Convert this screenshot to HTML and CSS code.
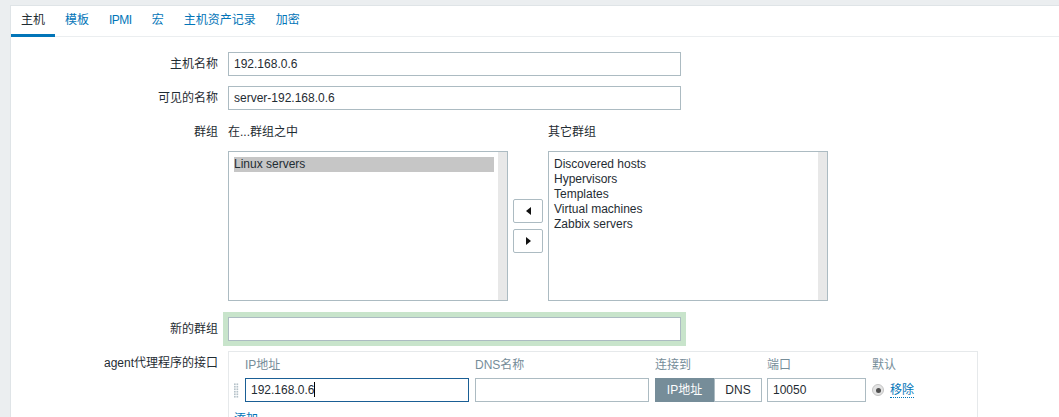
FILE: index.html
```html
<!DOCTYPE html>
<html lang="zh">
<head>
<meta charset="utf-8">
<title>主机</title>
<link rel="stylesheet" href="styles.css">
</head>
<body>
<div class="panel">
  <nav class="tabs">
    <a class="tab active">主机</a>
    <a class="tab">模板</a>
    <a class="tab narrow">IPMI</a>
    <a class="tab">宏</a>
    <a class="tab">主机资产记录</a>
    <a class="tab">加密</a>
  </nav>
  <div class="form">
    <div class="row">
      <div class="lbl">主机名称</div>
      <div class="field">192.168.0.6</div>
    </div>
    <div class="row">
      <div class="lbl">可见的名称</div>
      <div class="field">server-192.168.0.6</div>
    </div>
    <div class="row">
      <div class="lbl">群组</div>
      <div class="twin">
        <div class="twin-col">
          <div class="twin-head">在...群组之中</div>
          <div class="listbox">
            <div class="items">
              <div class="item selected">Linux servers</div>
            </div>
            <div class="track"></div>
          </div>
        </div>
        <div class="twin-buttons">
          <button class="arrow"><span class="tri left"></span></button>
          <button class="arrow"><span class="tri right"></span></button>
        </div>
        <div class="twin-col">
          <div class="twin-head">其它群组</div>
          <div class="listbox">
            <div class="items">
              <div class="item">Discovered hosts</div>
              <div class="item">Hypervisors</div>
              <div class="item">Templates</div>
              <div class="item">Virtual machines</div>
              <div class="item">Zabbix servers</div>
            </div>
            <div class="track"></div>
          </div>
        </div>
      </div>
    </div>
    <div class="row row-new">
      <div class="lbl">新的群组</div>
      <div class="field glow"></div>
    </div>
    <div class="row">
      <div class="lbl">agent代理程序的接口</div>
      <div class="iface">
        <div class="iface-grid">
          <div></div>
          <div class="th">IP地址</div>
          <div class="th">DNS名称</div>
          <div class="th">连接到</div>
          <div class="th">端口</div>
          <div class="th">默认</div>

          <div class="handle">
            <svg width="6" height="17" viewBox="0 0 6 17">
              <g fill="#b5c2c9">
                <rect x="0" y="0" width="2" height="2"/><rect x="3" y="0" width="2" height="2"/>
                <rect x="0" y="3" width="2" height="2"/><rect x="3" y="3" width="2" height="2"/>
                <rect x="0" y="6" width="2" height="2"/><rect x="3" y="6" width="2" height="2"/>
                <rect x="0" y="9" width="2" height="2"/><rect x="3" y="9" width="2" height="2"/>
                <rect x="0" y="12" width="2" height="2"/><rect x="3" y="12" width="2" height="2"/>
                <rect x="0" y="15" width="2" height="2"/><rect x="3" y="15" width="2" height="2"/>
              </g>
            </svg>
          </div>
          <div class="field focus">192.168.0.6<span class="caret"></span></div>
          <div class="field"></div>
          <div class="seg">
            <span class="seg-btn on">IP地址</span>
            <span class="seg-btn">DNS</span>
          </div>
          <div class="field">10050</div>
          <div class="def">
            <span class="radio"><span class="dot"></span></span>
            <a class="link">移除</a>
          </div>
        </div>
        <div class="add"><a class="link plain">添加</a></div>
      </div>
    </div>
  </div>
</div>
</body>
</html>
```

FILE: styles.css
```css
html, body {
  margin: 0;
  padding: 0;
  height: 417px;
  overflow: hidden;
  background: #ebeef0;
  font-family: "Liberation Sans", Arial, "Noto Sans CJK SC", sans-serif;
  font-size: 12px;
  color: #1f2c33;
}

.panel {
  margin: 5px 0 0 10px;
  background: #ffffff;
  border-top: 1px solid #dfe4e7;
  border-left: 1px solid #dfe4e7;
  height: 500px;
}

.tabs {
  display: flex;
  border-bottom: 1px solid #ebeef0;
}

.tab {
  display: block;
  padding: 0 10px;
  line-height: 28px;
  border-bottom: 3px solid transparent;
  margin-bottom: -1px;
  color: #0275b8;
  cursor: pointer;
}

.tab.narrow {
  letter-spacing: -0.5px;
}

.tab.active {
  color: #1f2c33;
  border-bottom-color: #0275b8;
}

.form {
  padding-top: 15px;
}

.row {
  display: flex;
  align-items: flex-start;
  margin-bottom: 10px;
}

.lbl {
  width: 207px;
  margin-right: 10px;
  text-align: right;
  line-height: 24px;
  white-space: nowrap;
}

.field {
  box-sizing: border-box;
  width: 453px;
  height: 24px;
  line-height: 22px;
  padding: 0 5px;
  border: 1px solid #acbbc2;
  background: #ffffff;
  white-space: nowrap;
  overflow: hidden;
}

.field.focus {
  border-color: #1a5f95;
}

.caret {
  display: inline-block;
  width: 1px;
  height: 15px;
  background: #000;
  vertical-align: -3px;
}

.twin {
  display: flex;
  align-items: flex-end;
  gap: 5px;
}

.twin-head {
  line-height: 24px;
  margin-bottom: 7px;
}

.listbox {
  box-sizing: border-box;
  width: 280px;
  height: 150px;
  border: 1px solid #acbbc2;
  display: flex;
  background: #fff;
}

.items {
  flex: 1;
  padding: 5px 4px 0 5px;
}

.item {
  line-height: 15px;
  height: 15px;
  white-space: nowrap;
}

.item.selected {
  background: #c6c6c6;
}

.track {
  width: 9px;
  background: #e8e8e8;
}

.twin-buttons {
  height: 150px;
  display: flex;
  flex-direction: column;
  justify-content: center;
  gap: 6px;
}

.arrow {
  box-sizing: border-box;
  width: 30px;
  height: 24px;
  padding: 0;
  border: 1px solid #acbbc2;
  border-radius: 2px;
  background: #fff;
  display: flex;
  align-items: center;
  justify-content: center;
}

.tri {
  width: 0;
  height: 0;
  border-top: 4px solid transparent;
  border-bottom: 4px solid transparent;
}

.tri.left {
  border-right: 5px solid #111;
}

.tri.right {
  border-left: 5px solid #111;
}

.row-new {
  margin-top: 16px;
}

.field.glow {
  box-shadow: 0 0 0 5px #c8e4cb;
}

.iface {
  box-sizing: border-box;
  width: 750px;
  border: 1px solid #e6e9eb;
  padding: 4px 5px 0 5px;
}

.iface-grid {
  display: grid;
  grid-template-columns: 5px 224px 174px 106px 99px auto;
  column-gap: 6px;
  row-gap: 4px;
  align-items: center;
}

.th {
  color: #768d99;
  line-height: 18px;
}

.iface .field {
  width: 100%;
}

.handle {
  height: 24px;
  display: flex;
  align-items: center;
}

.handle svg {
  display: block;
}

.seg {
  display: flex;
  height: 24px;
  width: 107px;
}

.seg-btn {
  box-sizing: border-box;
  height: 24px;
  line-height: 22px;
  text-align: center;
  border: 1px solid #acbbc2;
  background: #fff;
  color: #1f2c33;
  width: 48px;
}

.seg-btn.on {
  width: 59px;
  background: #768d99;
  border-color: #768d99;
  color: #fff;
}

.def {
  display: flex;
  align-items: center;
  gap: 6px;
}

.radio {
  box-sizing: border-box;
  width: 12px;
  height: 12px;
  border-radius: 50%;
  border: 1px solid #c4c4c4;
  background: #e3e3e3;
  display: flex;
  align-items: center;
  justify-content: center;
}

.dot {
  width: 5px;
  height: 5px;
  border-radius: 50%;
  background: #505050;
}

.link {
  color: #0275b8;
  border-bottom: 1px dotted #0275b8;
  line-height: 14px;
  cursor: pointer;
}

.link.plain {
  border-bottom: none;
}

.add {
  line-height: 24px;
  margin-top: 5px;
}
```
